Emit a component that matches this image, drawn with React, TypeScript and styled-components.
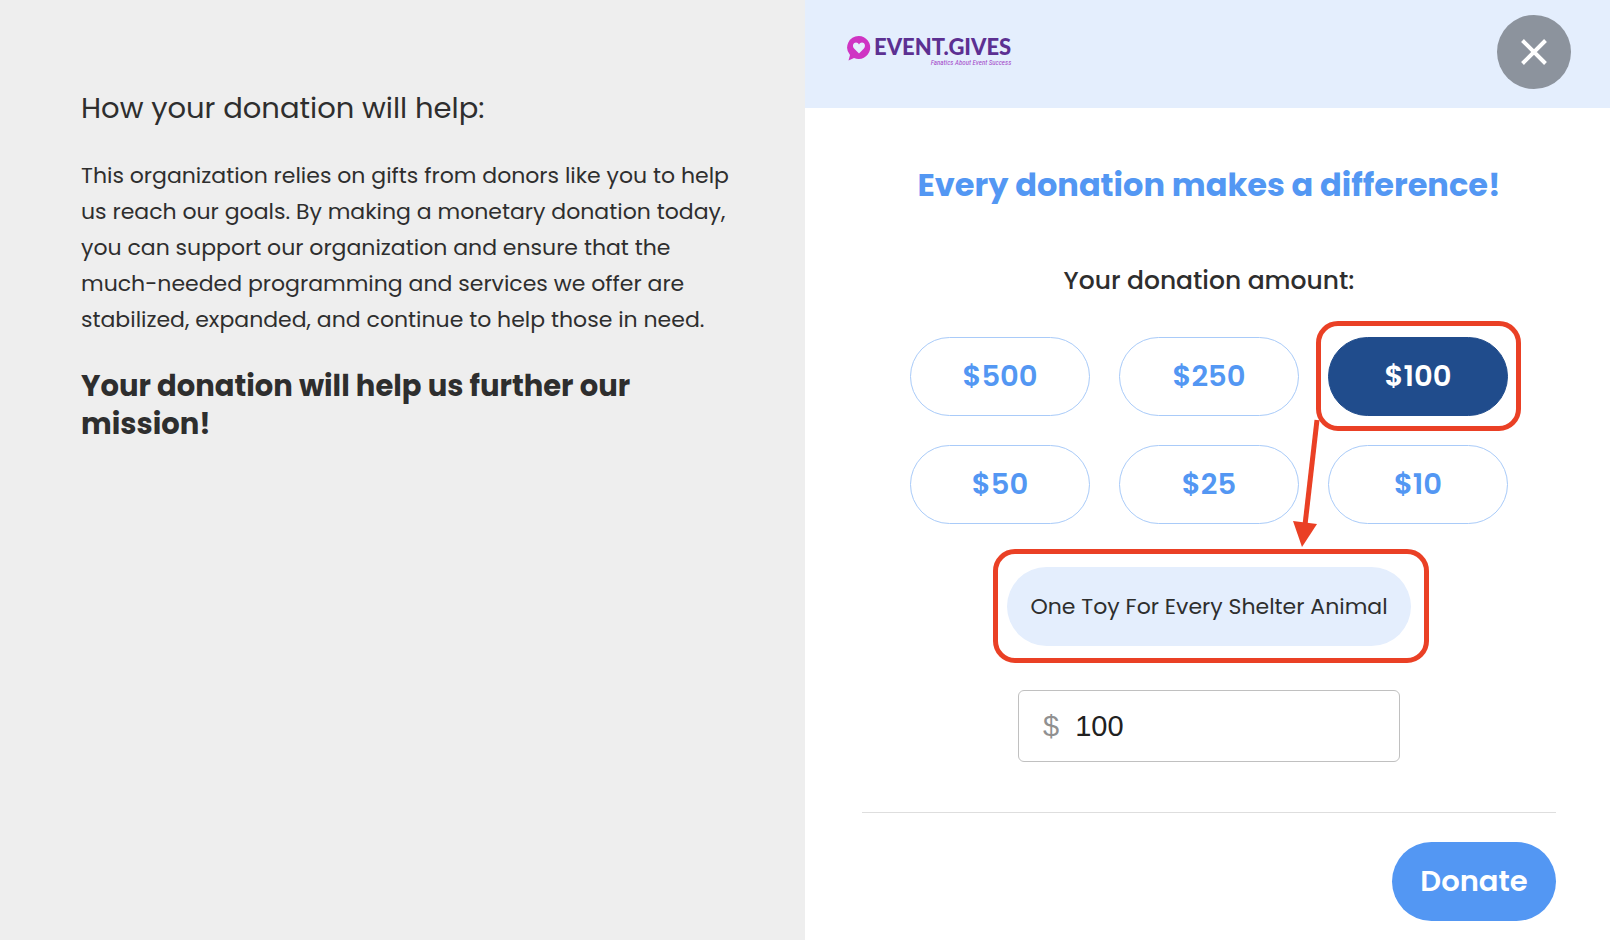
import React, { useState } from "react";
import styled, { createGlobalStyle, css } from "styled-components";

const colors = {
  blue: "#5397f3",
  navy: "#204c8c",
  outline: "#a9cbf9",
  pale: "#e4eefd",
  grey: "#eeeeee",
  ink: "#2e2e2e",
  mark: "#ea4025",
};

const GlobalStyle = createGlobalStyle`
  *, *::before, *::after { box-sizing: border-box; }
  body {
    margin: 0;
    background: #ffffff;
    color: ${colors.ink};
    font-family: Poppins, Inter, "Open Sans", sans-serif;
  }
  h1, h2, p { margin: 0; }
  button, input { font-family: inherit; }
`;

const Page = styled.div`
  display: grid;
  grid-template-columns: 1fr 1fr;
  min-height: 100vh;
`;

const Story = styled.section`
  padding: 88px 72px 40px 81px;
  background: ${colors.grey};
`;

const StoryTitle = styled.h2`
  font-size: 29px;
  line-height: 40px;
  font-weight: 400;
`;

const StoryText = styled.p`
  margin-top: 30px;
  font-size: 22px;
  line-height: 36px;
`;

const StoryMission = styled.p`
  max-width: 600px;
  margin-top: 29px;
  font-size: 29px;
  line-height: 38px;
  font-weight: 700;
`;

const Panel = styled.main`
  display: flex;
  flex-direction: column;
`;

const Header = styled.header`
  display: flex;
  justify-content: space-between;
  align-items: flex-start;
  height: 108px;
  padding: 15px 39px 0 42px;
  background: ${colors.pale};
`;

const Logo = styled.a`
  display: flex;
  gap: 3px;
  padding-top: 20px;
  text-decoration: none;
`;

const LogoWords = styled.span`
  display: flex;
  flex-direction: column;
  align-items: flex-end;
`;

const LogoName = styled.span`
  color: #5c3092;
  font-family: Lato, "Open Sans", sans-serif;
  font-size: 22px;
  line-height: 24px;
  font-weight: 900;
`;

const LogoTagline = styled.span`
  color: #a345c8;
  font-family: "Roboto Condensed", "Open Sans Condensed", "Liberation Sans Narrow", Lato, sans-serif;
  font-size: 7px;
  line-height: 8px;
  font-style: italic;
`;

const CloseButton = styled.button`
  display: grid;
  place-items: center;
  width: 74px;
  height: 74px;
  padding: 0;
  border: 0;
  border-radius: 50%;
  background: #8c939d;
  cursor: pointer;
`;

const Form = styled.form`
  display: flex;
  flex-direction: column;
  align-items: center;
  padding: 53px 54px 19px 57px;
`;

const Title = styled.h1`
  color: ${colors.blue};
  font-size: 32px;
  line-height: 48px;
  font-weight: 700;
  white-space: nowrap;
`;

const AmountLabel = styled.h2`
  margin-top: 56px;
  font-size: 25px;
  line-height: 32px;
  font-weight: 500;
`;

const AmountGrid = styled.div`
  display: grid;
  grid-template-columns: repeat(3, 180px);
  gap: 29px;
  margin-top: 40px;
`;

const Marked = styled.div`
  position: relative;
  display: grid;
`;

const pill = css`
  height: 79px;
  border-radius: 40px;
`;

const AmountButton = styled.button<{ $selected: boolean }>`
  ${pill}
  border: 1px solid ${(p) => (p.$selected ? colors.navy : colors.outline)};
  background: ${(p) => (p.$selected ? colors.navy : "#ffffff")};
  color: ${(p) => (p.$selected ? "#ffffff" : colors.blue)};
  font-size: 29px;
  font-weight: 600;
  cursor: pointer;
`;

const Outline = styled.span<{ $inset: string }>`
  position: absolute;
  inset: ${(p) => p.$inset};
  border: 5px solid ${colors.mark};
  border-radius: 22px;
  pointer-events: none;
`;

const Arrow = styled.svg`
  position: absolute;
  left: -40px;
  top: 80px;
  z-index: 1;
  pointer-events: none;
`;

const Impact = styled.p`
  ${pill}
  display: flex;
  align-items: center;
  justify-content: center;
  width: 404px;
  background: ${colors.pale};
  font-size: 22px;
  white-space: nowrap;
`;

const ImpactRow = styled.div`
  margin-top: 43px;
`;

const AmountField = styled.label`
  display: flex;
  align-items: center;
  gap: 16px;
  width: 382px;
  height: 72px;
  margin-top: 44px;
  padding: 0 24px;
  border: 1px solid #c0c0c0;
  border-radius: 6px;
  color: #909090;
  font-family: "Liberation Sans", sans-serif;
  font-size: 29px;
`;

const AmountInput = styled.input`
  flex: 1;
  min-width: 0;
  padding: 0;
  border: 0;
  outline: 0;
  background: transparent;
  color: #212121;
  font-size: 29px;
`;

const Footer = styled.div`
  display: flex;
  justify-content: flex-end;
  width: 100%;
  margin-top: 50px;
  padding-top: 29px;
  border-top: 1px solid #dedede;
`;

const DonateButton = styled.button`
  ${pill}
  width: 164px;
  border: 0;
  background: ${colors.blue};
  color: #ffffff;
  font-size: 29px;
  font-weight: 600;
  cursor: pointer;
`;

const amounts = ["500", "250", "100", "50", "25", "10"];

function LogoMark() {
  return (
    <svg width="24" height="26" viewBox="0 0 24 26" aria-hidden="true">
      <path
        d="M12 1a11.5 11.5 0 1 1-5 22L1.500 25.500 3 20A11.500 11.500 0 0 1 12 1z"
        fill="#cf34c3"
      />
      <path
        d="M12 18.500 7.300 13.800C4.800 11 6.300 7.500 9 7.500c1.400 0 2.400.8 3 1.900.6-1.100 1.600-1.900 3-1.900 2.700 0 4.200 3.500 1.700 6.300z"
        fill={colors.pale}
      />
    </svg>
  );
}

export default function App() {
  const [amount, setAmount] = useState("100");

  return (
    <>
      <GlobalStyle />
      <Page>
        <Story>
          <StoryTitle>How your donation will help:</StoryTitle>
          <StoryText>
            This organization relies on gifts from donors like you to help us
            reach our goals. By making a monetary donation today, you can
            support our organization and ensure that the much-needed
            programming and services we offer are stabilized, expanded, and
            continue to help those in need.
          </StoryText>
          <StoryMission>
            Your donation will help us further our mission!
          </StoryMission>
        </Story>

        <Panel>
          <Header>
            <Logo href="#">
              <LogoMark />
              <LogoWords>
                <LogoName>EVENT.GIVES</LogoName>
                <LogoTagline>Fanatics About Event Success</LogoTagline>
              </LogoWords>
            </Logo>
            <CloseButton type="button" aria-label="Close">
              <svg width="26" height="26" viewBox="0 0 26 26" aria-hidden="true">
                <path d="M1.500 1.500l23 23M24.500 1.500l-23 23" stroke="#fff" strokeWidth="4" />
              </svg>
            </CloseButton>
          </Header>

          <Form onSubmit={(e) => e.preventDefault()}>
            <Title>Every donation makes a difference!</Title>
            <AmountLabel>Your donation amount:</AmountLabel>

            <AmountGrid>
              {amounts.map((value) => (
                <Marked key={value}>
                  <AmountButton
                    type="button"
                    $selected={value === amount}
                    aria-pressed={value === amount}
                    onClick={() => setAmount(value)}
                  >
                    ${value}
                  </AmountButton>
                  {value === "100" && (
                    <>
                      <Outline $inset="-16px -13px -15px -12px" />
                      <Arrow width="40" height="134" viewBox="0 0 40 134" aria-hidden="true">
                        <path d="M29 3L17 108" stroke={colors.mark} strokeWidth="5" />
                        <path d="M5 104L29 107L14 130z" fill={colors.mark} />
                      </Arrow>
                    </>
                  )}
                </Marked>
              ))}
            </AmountGrid>

            <ImpactRow>
              <Marked>
                <Impact>One Toy For Every Shelter Animal</Impact>
                <Outline $inset="-18px -18px -17px -14px" />
              </Marked>
            </ImpactRow>

            <AmountField>
              $
              <AmountInput
                aria-label="Donation amount"
                inputMode="numeric"
                value={amount}
                onChange={(e) => setAmount(e.target.value)}
              />
            </AmountField>

            <Footer>
              <DonateButton type="submit">Donate</DonateButton>
            </Footer>
          </Form>
        </Panel>
      </Page>
    </>
  );
}
